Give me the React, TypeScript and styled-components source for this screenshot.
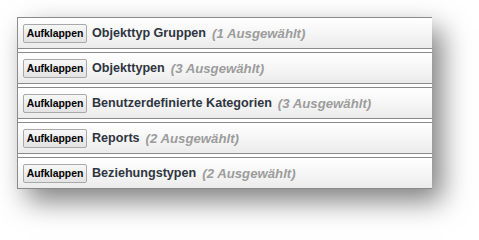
import React from "react";
import styled, { createGlobalStyle } from "styled-components";

interface Group {
    name: string;
    selected: number;
}

const groups: Group[] = [
    { name: "Objekttyp Gruppen", selected: 1 },
    { name: "Objekttypen", selected: 3 },
    { name: "Benutzerdefinierte Kategorien", selected: 3 },
    { name: "Reports", selected: 2 },
    { name: "Beziehungstypen", selected: 2 },
];

const App: React.FC = () => {
    return (
        <>
            <GlobalStyle />
            <Page>
                <Panel>
                    {groups.map((g) => (
                        <Row key={g.name}>
                            <ToggleButton type="button">Aufklappen</ToggleButton>
                            <Title>{g.name}</Title>
                            <Count>({g.selected} Ausgewählt)</Count>
                        </Row>
                    ))}
                </Panel>
            </Page>
        </>
    );
};

const GlobalStyle = createGlobalStyle`
    html, body {
        margin: 0;
        padding: 0;
        background: #fff;
    }
`;

const Page = styled.div`
    width: 479px;
    height: 240px;
    padding: 17px 0 0 17px;
    box-sizing: border-box;
    font-family: "Liberation Sans", Arial, sans-serif;
`;

const Panel = styled.div`
    width: 414px;
    background: #fff;
    border-left: 1px solid #8c8c8c;
    box-shadow: 10px 12px 26px rgba(0, 0, 0, 0.5);
`;

const Row = styled.div`
    display: flex;
    align-items: center;
    height: 30px;
    padding-left: 5px;
    border-top: 1px solid #8a8a8a;
    border-bottom: 1px solid #8a8a8a;
    margin-bottom: 3px;
    background: linear-gradient(to bottom, #ffffff 0%, #f6f6f6 50%, #ebebeb 100%);
`;

const ToggleButton = styled.button`
    box-sizing: border-box;
    width: 64px;
    height: 19px;
    padding: 0;
    margin: 0 5px 0 0;
    border: 1px solid #a9a9a9;
    border-radius: 2px;
    background: linear-gradient(to bottom, #f7f7f7, #e3e3e3);
    font-family: "Liberation Sans", Arial, sans-serif;
    font-weight: bold;
    font-size: 10.4px;
    color: #000;
    cursor: pointer;
`;

const Title = styled.span`
    font-weight: bold;
    font-size: 12.6px;
    color: #2f3540;
    white-space: nowrap;
`;

const Count = styled.span`
    margin-left: 6px;
    font-weight: bold;
    font-style: italic;
    font-size: 13.2px;
    color: #9c9c9c;
    white-space: nowrap;
`;

export default App;
